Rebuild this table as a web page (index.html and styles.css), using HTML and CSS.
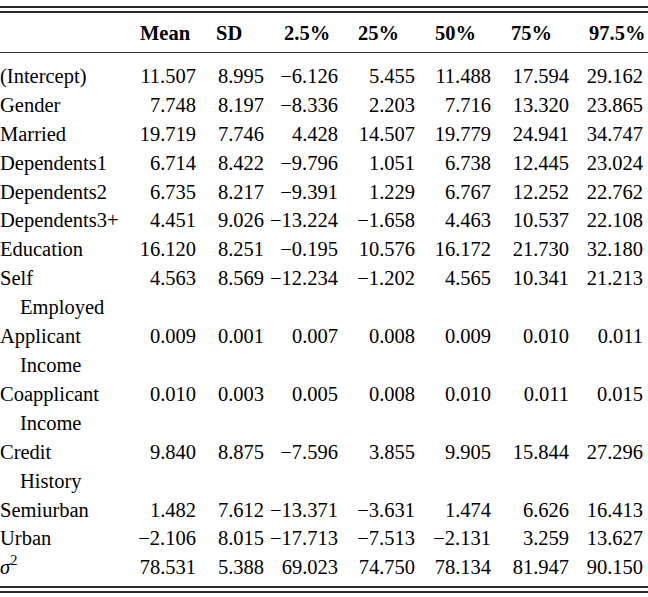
FILE: index.html
```html
<!DOCTYPE html>
<html lang="en">
<head>
<meta charset="utf-8">
<title>Posterior summary</title>
<link rel="stylesheet" href="styles.css">
</head>
<body>
<div class="frame">
<table class="stats">
  <colgroup>
    <col class="c-label"><col class="c-mean"><col class="c-sd"><col class="c-q1"><col class="c-q2"><col class="c-q3"><col class="c-q4"><col class="c-q5">
  </colgroup>
  <thead>
    <tr><th></th><th>Mean</th><th>SD</th><th>2.5%</th><th>25%</th><th>50%</th><th>75%</th><th>97.5%</th></tr>
  </thead>
  <tbody>
    <tr><td>(Intercept)</td><td>11.507</td><td>8.995</td><td>−6.126</td><td>5.455</td><td>11.488</td><td>17.594</td><td>29.162</td></tr>
    <tr><td>Gender</td><td>7.748</td><td>8.197</td><td>−8.336</td><td>2.203</td><td>7.716</td><td>13.320</td><td>23.865</td></tr>
    <tr><td>Married</td><td>19.719</td><td>7.746</td><td>4.428</td><td>14.507</td><td>19.779</td><td>24.941</td><td>34.747</td></tr>
    <tr><td>Dependents1</td><td>6.714</td><td>8.422</td><td>−9.796</td><td>1.051</td><td>6.738</td><td>12.445</td><td>23.024</td></tr>
    <tr><td>Dependents2</td><td>6.735</td><td>8.217</td><td>−9.391</td><td>1.229</td><td>6.767</td><td>12.252</td><td>22.762</td></tr>
    <tr><td>Dependents3+</td><td>4.451</td><td>9.026</td><td>−13.224</td><td>−1.658</td><td>4.463</td><td>10.537</td><td>22.108</td></tr>
    <tr><td>Education</td><td>16.120</td><td>8.251</td><td>−0.195</td><td>10.576</td><td>16.172</td><td>21.730</td><td>32.180</td></tr>
    <tr><td>Self<span class="cont">Employed</span></td><td>4.563</td><td>8.569</td><td>−12.234</td><td>−1.202</td><td>4.565</td><td>10.341</td><td>21.213</td></tr>
    <tr><td>Applicant<span class="cont">Income</span></td><td>0.009</td><td>0.001</td><td>0.007</td><td>0.008</td><td>0.009</td><td>0.010</td><td>0.011</td></tr>
    <tr><td>Coapplicant<span class="cont">Income</span></td><td>0.010</td><td>0.003</td><td>0.005</td><td>0.008</td><td>0.010</td><td>0.011</td><td>0.015</td></tr>
    <tr><td>Credit<span class="cont">History</span></td><td>9.840</td><td>8.875</td><td>−7.596</td><td>3.855</td><td>9.905</td><td>15.844</td><td>27.296</td></tr>
    <tr><td>Semiurban</td><td>1.482</td><td>7.612</td><td>−13.371</td><td>−3.631</td><td>1.474</td><td>6.626</td><td>16.413</td></tr>
    <tr><td>Urban</td><td>−2.106</td><td>8.015</td><td>−17.713</td><td>−7.513</td><td>−2.131</td><td>3.259</td><td>13.627</td></tr>
    <tr><td><i class="sym">σ</i><sup>2</sup></td><td>78.531</td><td>5.388</td><td>69.023</td><td>74.750</td><td>78.134</td><td>81.947</td><td>90.150</td></tr>
  </tbody>
</table>
</div>
</body>
</html>
```
FILE: styles.css
```css
html, body {
  margin: 0;
  padding: 0;
  background: #ffffff;
}

body {
  font-family: "Liberation Serif", "Times New Roman", serif;
  font-size: 20.5px;
  color: #000000;
}

.frame {
  width: 648px;
  margin-top: 6px;
  border-top: 2px solid #2a2a2a;
  border-bottom: 2px solid #2a2a2a;
  padding: 3px 0;
}

.stats {
  width: 648px;
  table-layout: fixed;
  border-collapse: separate;
  border-spacing: 0;
  border-top: 2px solid #2a2a2a;
  border-bottom: 2px solid #2a2a2a;
  line-height: 28.9px;
}

.c-label { width: 120px; }
.c-mean { width: 76px; }
.c-sd { width: 68px; }
.c-q1 { width: 74px; }
.c-q2 { width: 77px; }
.c-q3 { width: 76px; }
.c-q4 { width: 78px; }
.c-q5 { width: 79px; }

.stats th {
  font-weight: bold;
  text-align: left;
  padding: 6px 0 4px 20px;
  border-bottom: 1px solid #333333;
  white-space: nowrap;
}

.stats td {
  padding: 0;
  text-align: right;
  vertical-align: top;
  white-space: nowrap;
}

.stats td:first-child {
  text-align: left;
}

.stats th:last-child,
.stats td:last-child {
  padding-right: 5px;
}

.stats tbody tr:first-child td {
  padding-top: 9px;
}

.stats tbody tr:last-child td {
  padding-bottom: 4px;
}

.cont {
  display: block;
  padding-left: 20px;
}

.sym {
  font-style: italic;
}

sup {
  font-size: 0.7em;
  line-height: 0;
  vertical-align: 0.6em;
}
```
